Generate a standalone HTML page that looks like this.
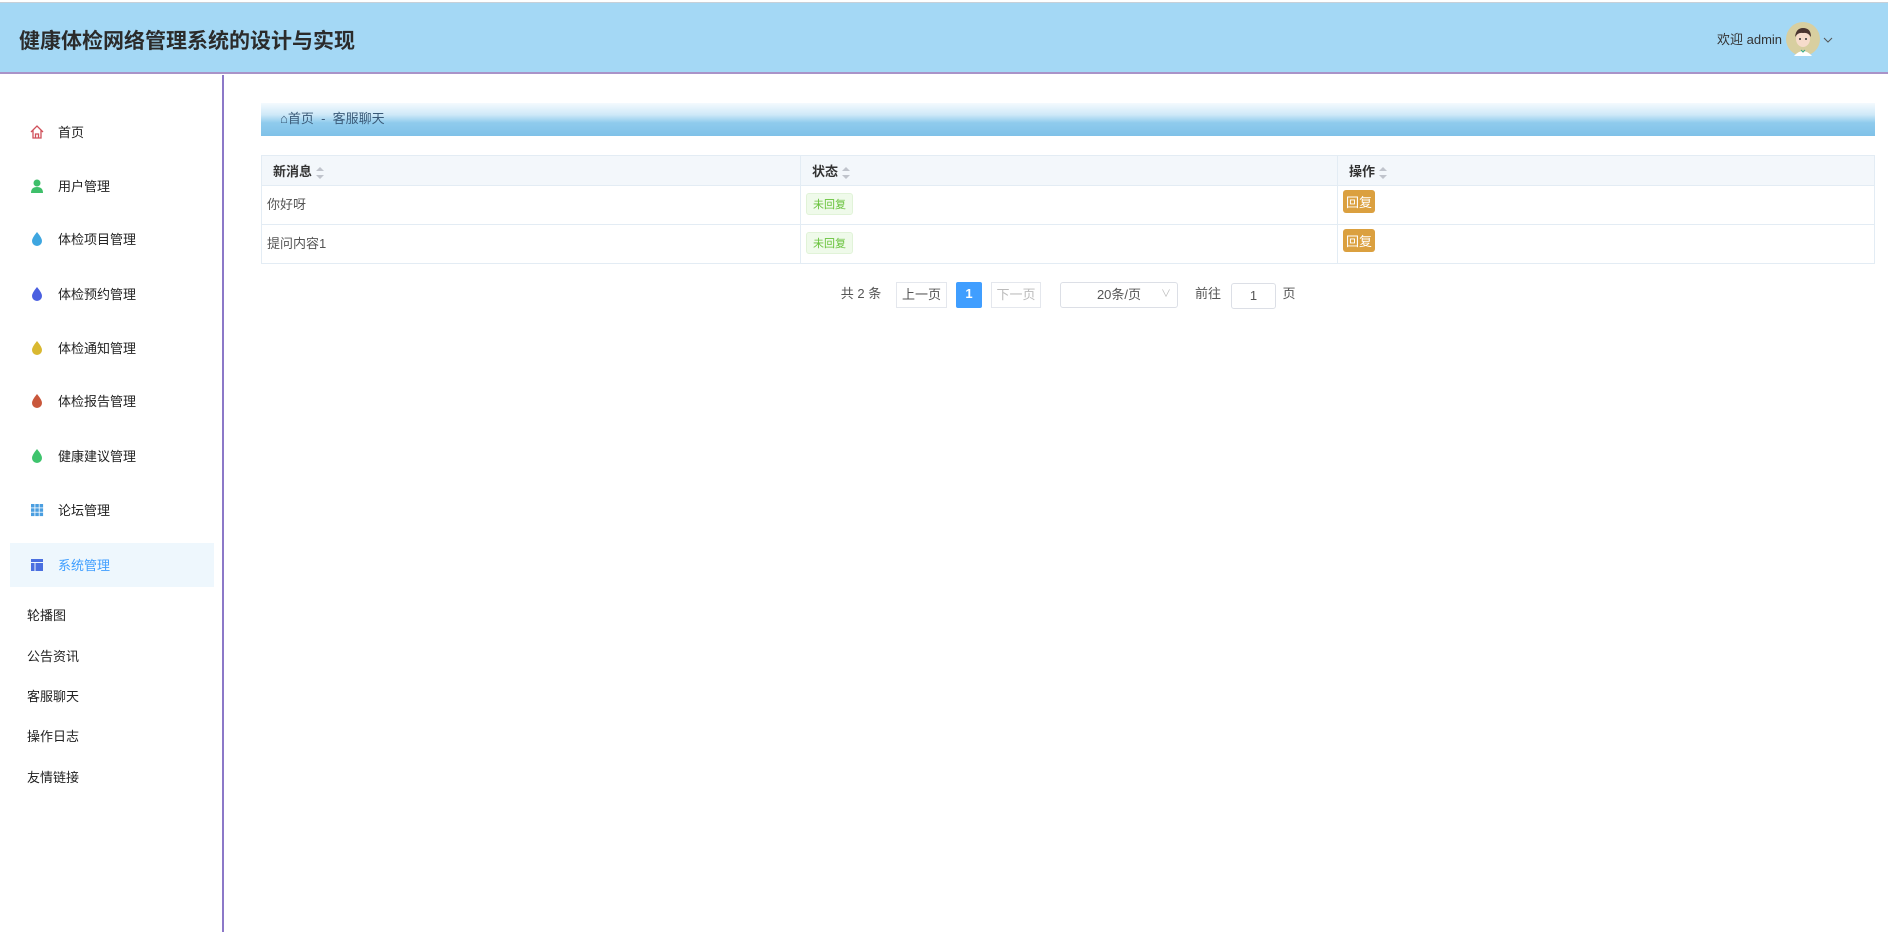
<!DOCTYPE html>
<html><head><meta charset="utf-8"><style>
*{margin:0;padding:0;box-sizing:border-box}
body{width:1896px;height:932px;overflow:hidden;background:#fff;font-family:"Liberation Sans","Noto Sans CJK SC",sans-serif;color:#333;position:relative}
.abs{position:absolute}
#hdr{left:0;top:2px;width:1888px;height:72px;background:#a4d8f5;border-top:1px solid #c8d0d8;border-bottom:2px solid #a993c8}
#title{left:19px;top:22px;font-size:21px;font-weight:bold;color:#2b2b2b}
#welcome{left:1717px;top:26px;font-size:13px;color:#333}
#side{left:0;top:75px;width:224px;height:857px;border-right:2px solid #8c78c8}
.mi{position:absolute;left:10px;width:204px;height:44px;font-size:13px;color:#222}
.mi span{position:absolute;left:48px;top:12px}
.mi svg{position:absolute;left:20px;top:15px}
.sub{position:absolute;left:27px;font-size:13px;color:#222}
#bc{left:261px;top:103px;width:1614px;height:33px;background:linear-gradient(#f4fafe 0%,#cfe9f8 35%,#8fcbed 60%,#7fc1e8 100%)}
#bc div{position:absolute;left:19px;top:5px;font-size:13px;color:#3a5a78}
table{position:absolute;left:261px;top:155px;width:1614px;border-collapse:collapse;font-size:13px}
td,th{border:1px solid #e3ecf4;text-align:left;padding:0 5px}
th{background:#f3f7fb;height:30px;font-weight:bold;color:#333;padding-left:11px}
td{height:39px;color:#555;padding-bottom:3px}
.sort{display:inline-block;vertical-align:middle;margin-left:4px;width:8px;height:12px;position:relative}
.sort:before{content:"";position:absolute;top:0;left:0;border:4px solid transparent;border-bottom-color:#c0c4cc;border-top:0}
.sort:after{content:"";position:absolute;bottom:0;left:0;border:4px solid transparent;border-top-color:#c0c4cc;border-bottom:0}
.tag{display:inline-block;background:#effaea;border:1px solid #e1f3d8;color:#67c23a;font-size:11px;padding:2px 6px;border-radius:3px}
.btn{display:inline-block;background:#dba03f;color:#fff;font-size:13px;padding:2px 3px;border-radius:3px;margin-top:-6px}
.pg{position:absolute;top:282px;height:26px;font-size:13px;line-height:24px;text-align:center;color:#555}
.pb{border:1px solid #e4e7ed;background:#fff}
</style></head><body>
<div id="hdr" class="abs"><div id="title" class="abs">健康体检网络管理系统的设计与实现</div>
<div id="welcome" class="abs">欢迎 admin</div>
<svg class="abs" style="left:1786px;top:19px" width="34" height="34" viewBox="0 0 34 34"><circle cx="17" cy="17" r="17" fill="#d8cfa0"/><path d="M8 34 Q17 24 26 34Z" fill="#fff"/><ellipse cx="17" cy="17" rx="7" ry="8" fill="#f6dccb"/><path d="M9 15 Q10 6 17 6 Q25 6 25 15 Q22 10 17 11 Q12 10 9 15Z" fill="#4a3530"/><circle cx="14" cy="17" r="1" fill="#333"/><circle cx="20" cy="17" r="1" fill="#333"/><path d="M15 28 L17 30 L19 28" stroke="#3a8" fill="none"/></svg>
<svg class="abs" style="left:1823px;top:34px" width="10" height="8"><path d="M1 1 L5 5 L9 1" stroke="#555" fill="none"/></svg>
</div>
<div id="side" class="abs">
<div class="mi" style="top:35px"><svg width="14" height="14" viewBox="0 0 14 14"><path d="M1 7 L7 1 L13 7 M3 5 V13 H11 V5 M5.5 13 V9 H8.5 V13" stroke="#d0505a" stroke-width="1.3" fill="none"/></svg><span>首页</span></div>
<div class="mi" style="top:89px"><svg width="14" height="14" viewBox="0 0 14 14"><circle cx="7" cy="4" r="3.5" fill="#3ebf6a"/><path d="M1 14 Q1 8 7 8 Q13 8 13 14Z" fill="#3ebf6a"/></svg><span>用户管理</span></div>
<div class="mi" style="top:142px"><svg width="14" height="14" viewBox="0 0 14 14"><path d="M7 0 Q12 6 12 9 A5 5 0 0 1 2 9 Q2 6 7 0Z" fill="#3ea6e0"/></svg><span>体检项目管理</span></div>
<div class="mi" style="top:197px"><svg width="14" height="14" viewBox="0 0 14 14"><path d="M7 0 Q12 6 12 9 A5 5 0 0 1 2 9 Q2 6 7 0Z" fill="#4a5fe0"/></svg><span>体检预约管理</span></div>
<div class="mi" style="top:251px"><svg width="14" height="14" viewBox="0 0 14 14"><path d="M7 0 Q12 6 12 9 A5 5 0 0 1 2 9 Q2 6 7 0Z" fill="#d9b830"/></svg><span>体检通知管理</span></div>
<div class="mi" style="top:304px"><svg width="14" height="14" viewBox="0 0 14 14"><path d="M7 0 Q12 6 12 9 A5 5 0 0 1 2 9 Q2 6 7 0Z" fill="#c9573b"/></svg><span>体检报告管理</span></div>
<div class="mi" style="top:359px"><svg width="14" height="14" viewBox="0 0 14 14"><path d="M7 0 Q12 6 12 9 A5 5 0 0 1 2 9 Q2 6 7 0Z" fill="#3ec46d"/></svg><span>健康建议管理</span></div>
<div class="mi" style="top:413px"><svg width="14" height="14" viewBox="0 0 14 14"><g fill="#4a9ee0"><rect x="1" y="1" width="3.5" height="3.5"/><rect x="5.3" y="1" width="3.5" height="3.5"/><rect x="9.6" y="1" width="3.5" height="3.5"/><rect x="1" y="5.3" width="3.5" height="3.5"/><rect x="5.3" y="5.3" width="3.5" height="3.5"/><rect x="9.6" y="5.3" width="3.5" height="3.5"/><rect x="1" y="9.6" width="3.5" height="3.5"/><rect x="5.3" y="9.6" width="3.5" height="3.5"/><rect x="9.6" y="9.6" width="3.5" height="3.5"/></g></svg><span>论坛管理</span></div>
<div class="mi" style="top:468px;background:#eef7fd;color:#409eff"><svg width="14" height="14" viewBox="0 0 14 14"><rect x="1" y="1" width="12" height="3" fill="#4a6fe0"/><rect x="1" y="5" width="3.5" height="8" fill="#4a6fe0"/><rect x="5.5" y="5" width="7.5" height="8" fill="#4a6fe0"/></svg><span>系统管理</span></div>
<div class="sub" style="top:530px">轮播图</div>
<div class="sub" style="top:571px">公告资讯</div>
<div class="sub" style="top:611px">客服聊天</div>
<div class="sub" style="top:651px">操作日志</div>
<div class="sub" style="top:692px">友情链接</div>
</div>
<div id="bc" class="abs"><div>⌂首页 &nbsp;-&nbsp; 客服聊天</div></div>
<table>
<tr><th style="width:539px">新消息<i class="sort"></i></th><th style="width:537px">状态<i class="sort"></i></th><th>操作<i class="sort"></i></th></tr>
<tr><td>你好呀</td><td><span class="tag">未回复</span></td><td><span class="btn">回复</span></td></tr>
<tr><td>提问内容1</td><td><span class="tag">未回复</span></td><td><span class="btn">回复</span></td></tr>
</table>
<div class="pg" style="left:836px;width:50px">共 2 条</div>
<div class="pg pb" style="left:896px;width:51px">上一页</div>
<div class="pg" style="left:956px;width:26px;background:#409eff;color:#fff;font-weight:bold;border-radius:2px">1</div>
<div class="pg pb" style="left:991px;width:50px;color:#bbb">下一页</div>
<div class="pg pb" style="left:1060px;width:118px;border-radius:3px;border-color:#dcdfe6">20条/页<span style="position:absolute;right:6px;color:#bbb;font-size:10px">∨</span></div>
<div class="pg" style="left:1190px;width:36px">前往</div>
<div class="pg pb" style="left:1231px;width:45px;border-color:#dcdfe6;border-radius:3px;top:283px">1</div>
<div class="pg" style="left:1281px;width:16px">页</div>
</body></html>
